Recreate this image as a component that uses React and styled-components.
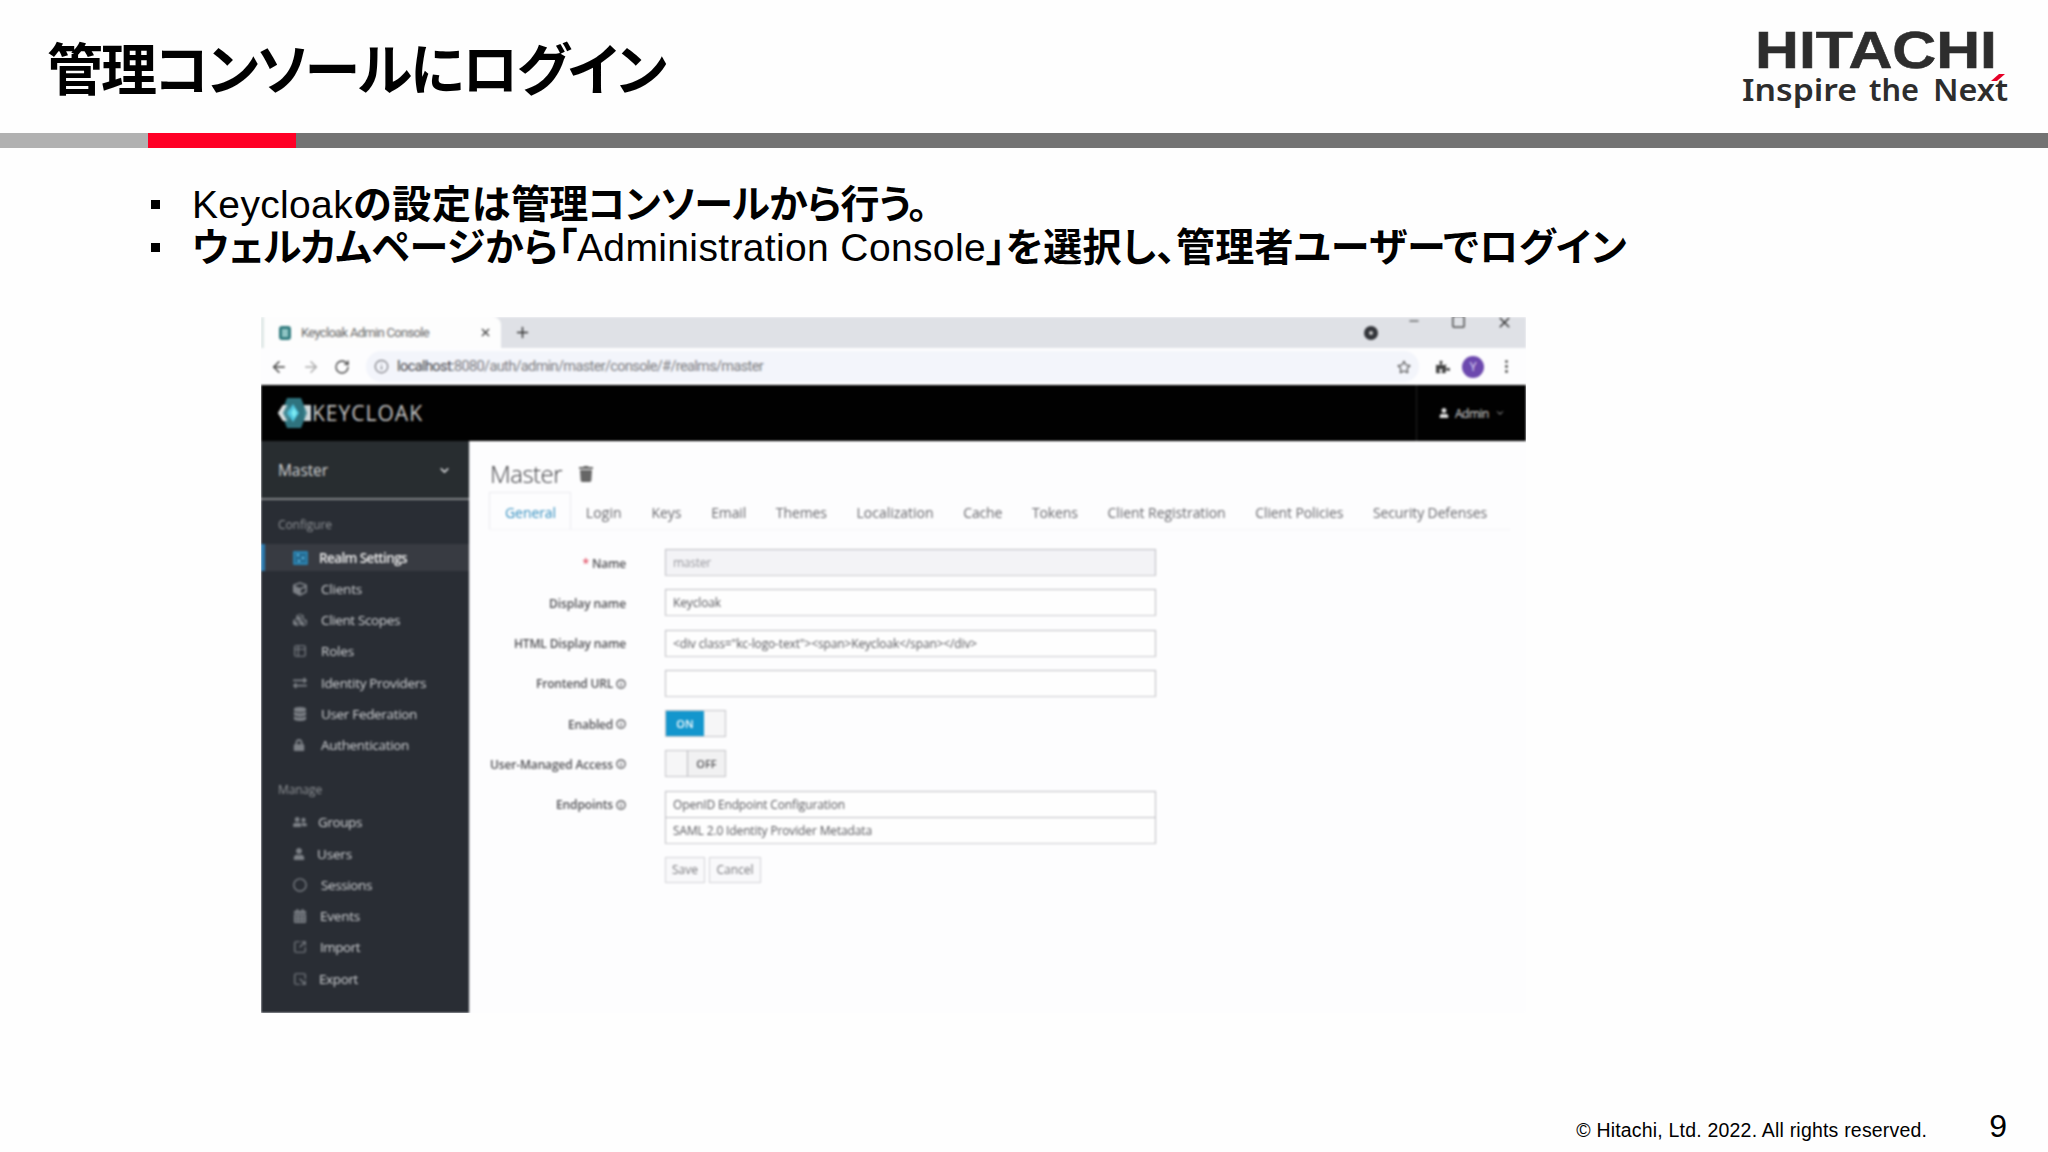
import { useLayoutEffect, useRef, useState } from 'react';
import styled, { createGlobalStyle } from 'styled-components';
import {
  FaCalendarAlt,
  FaCube,
  FaCubes,
  FaDatabase,
  FaExchangeAlt,
  FaLock,
  FaPuzzlePiece,
  FaRegCircle,
  FaRegStar,
  FaTrash,
  FaUser,
  FaUserFriends,
} from 'react-icons/fa';
import {
  ArrowLeft,
  ArrowRight,
  ChevronDown,
  EllipsisVertical,
  Info,
  Minus,
  Plus,
  RotateCw,
  Square,
  SquareArrowOutUpRight,
  SquareArrowOutDownRight,
  Table2,
  X,
} from 'lucide-react';

const GlobalStyle = createGlobalStyle`
  * {
    box-sizing: border-box;
  }

  body {
    margin: 0;
    background: #fefefe;
    color: #000;
    font-family: 'Liberation Sans', 'Noto Sans CJK JP', sans-serif;
  }
`;

const Slide = styled.div`
  width: 2048px;
  height: 1152px;
  display: flex;
  flex-direction: column;
  overflow: hidden;
`;

/* ---------- slide header ---------- */

const Header = styled.header`
  height: 133px;
  flex: none;
  padding: 0 40px 0 47px;
  display: flex;
  justify-content: space-between;
`;

const Title = styled.h1`
  margin: 0;
  height: 132px;
  line-height: 132px;
  font-family: 'Noto Sans CJK JP', sans-serif;
  font-size: 56px;
  font-weight: bold;
  font-feature-settings: 'palt';
`;

const Logo = styled.svg`
  width: 268px;
  height: 120px;
  fill: #2d2d2d;
`;

const ColorBar = styled.div`
  height: 15px;
  flex: none;
  display: grid;
  grid-template-columns: 148px 148px 1fr;
`;

const Stripe = styled.div`
  background: ${(p) => p.$color};
`;

/* ---------- bullets ---------- */

const Bullets = styled.ul`
  margin: 0;
  padding: 32px 0 0 151px;
  height: 169px;
  flex: none;
  list-style: none;
`;

const Bullet = styled.li`
  height: 43px;
  line-height: 43px;
  display: flex;
  align-items: baseline;
  font-size: 39px;

  &::before {
    content: '';
    width: 9px;
    height: 9px;
    margin-right: 32px;
    position: relative;
    top: -9px;
    background: #000;
  }
`;

const Jp = styled.span`
  font-family: 'Noto Sans CJK JP', sans-serif;
  font-weight: bold;
  font-feature-settings: 'palt';
`;

/* ---------- browser window ---------- */

const Window = styled.section`
  width: 1265px;
  height: 696px;
  margin-left: 261px;
  flex: none;
  overflow: hidden;
  background: #fdfdfe;
  font-family: 'Open Sans', 'Noto Sans', sans-serif;
`;

const Soft = styled.div`
  height: 100%;
  display: flex;
  flex-direction: column;
  filter: blur(0.85px);
`;

const TabStrip = styled.div`
  height: 31px;
  flex: none;
  display: flex;
  background: #dfe1e6;
`;

const BrowserTab = styled.div`
  width: 240px;
  padding: 0 9px 0 15px;
  display: flex;
  align-items: center;
  background: #fdfdfd;
  border-left: 3px solid #dfe8e6;
  border-radius: 0 8px 0 0;
  font-family: Roboto, sans-serif;
  font-size: 13px;
  color: #6a6a6a;
`;

const Favicon = styled.span`
  width: 12px;
  height: 14px;
  margin-right: 10px;
  border: 3px solid #347d80;
  border-radius: 3px;
  background: #8fc4c4;
`;

const NewTab = styled.span`
  padding-left: 13px;
  display: flex;
  align-items: center;
  color: #333;
`;

const Push = styled.span`
  flex: 1;
`;

const WindowButtons = styled.div`
  width: 171px;
  display: flex;
  color: #333;

  svg {
    flex: none;
    margin-top: -3px;
    margin-right: 30px;
  }
`;

const MediaDot = styled.span`
  width: 14px;
  height: 14px;
  flex: none;
  margin: 9px 29px 0 9px;
  border: 5px solid #33353a;
  border-radius: 50%;
  background: #ccc;
`;

const Toolbar = styled.div`
  height: 37px;
  flex: none;
  padding: 0 11px 0 9px;
  display: flex;
  align-items: center;
  gap: 14px;
  background: #fdfdfe;
  color: #444;
`;

const Address = styled.div`
  height: 31px;
  flex: 1;
  margin: 0 3px 0 2px;
  padding: 0 8px 0 8px;
  display: flex;
  align-items: center;
  gap: 8px;
  border-radius: 15px;
  background: #f3f5fb;
  font-family: Roboto, sans-serif;
  font-size: 14.5px;
  color: #7d7d82;
`;

const Host = styled.span`
  color: #444448;
`;

const Avatar = styled.span`
  width: 22px;
  height: 22px;
  margin-left: -2px;
  border-radius: 50%;
  background: #6c48ae;
  color: #d5c8ee;
  font-family: Roboto, sans-serif;
  font-size: 12px;
  line-height: 22px;
  text-align: center;
`;

/* ---------- keycloak console ---------- */

const Masthead = styled.div`
  height: 56px;
  flex: none;
  padding-left: 17px;
  display: flex;
  align-items: center;
  background: #010101;
`;

const Brand = styled.div`
  display: flex;
  align-items: center;
  font-family: 'Open Sans', sans-serif;
  font-size: 21px;
  font-weight: 500;
  line-height: 52px;
  color: #c8c8c8;
`;

const UserMenu = styled.div`
  width: 110px;
  height: 56px;
  padding-left: 22px;
  display: flex;
  align-items: center;
  gap: 6px;
  border-left: 1px solid #222;
  font-size: 12px;
  color: #dcdcdc;
`;

const Body = styled.div`
  flex: 1;
  display: flex;
`;

const Sidebar = styled.nav`
  width: 208px;
  flex: none;
  background: #292d34;
  color: #d2d4d6;
`;

const Realm = styled.div`
  height: 59px;
  padding: 1px 18px 0 17px;
  display: flex;
  align-items: center;
  justify-content: space-between;
  border-bottom: 2px solid #808386;
  background: #282d30;
  font-size: 15.5px;
`;

const Group = styled.div`
  height: ${(p) => p.$height}px;
  padding: ${(p) => p.$top}px 0 0 17px;
  font-size: 12px;
  line-height: 18px;
  color: #8f9296;
`;

const Item = styled.div`
  height: 31.25px;
  display: flex;
  align-items: center;
`;

const ItemInner = styled.div`
  width: 100%;
  height: 27px;
  padding-left: ${(p) => (p.$active ? 28 : 32)}px;
  display: flex;
  align-items: center;
  font-size: 13.5px;
  font-weight: ${(p) => (p.$active ? 600 : 500)};
  color: ${(p) => (p.$active ? '#f0f0f0' : '#cfd1d4')};
  background: ${(p) => (p.$active ? '#383b42' : 'transparent')};
  border-left: ${(p) => (p.$active ? '4px solid #2b79ad' : 'none')};
`;

const ItemIcon = styled.span`
  width: ${(p) => p.$width}px;
  display: flex;
  color: ${(p) => (p.$active ? '#2f8fc0' : '#7c8086')};
`;

const Content = styled.main`
  flex: 1;
  padding: 14px 16px 0 19px;
  border-left: 1px solid #eaebef;
  background: #fdfdfe;
`;

const PageTitle = styled.h2`
  height: 37px;
  margin: 0;
  padding-left: 1px;
  display: flex;
  align-items: center;
  gap: 16px;
  font-size: 24px;
  font-weight: 300;
  color: #3c3c40;
`;

const Tabs = styled.div`
  height: 38px;
  display: flex;
  border-bottom: 1px solid #f4f4f7;
  font-size: 14px;
  color: #68686d;
`;

const Tab = styled.span`
  height: 37px;
  flex: none;
  margin-right: ${(p) => (p.$active ? 0 : 14.9)}px;
  padding: 0 ${(p) => (p.$active ? 14 : 0)}px 0 ${(p) => (p.$active ? 15 : 14.8)}px;
  line-height: ${(p) => (p.$active ? 39 : 41)}px;
  color: ${(p) => (p.$active ? '#3690c0' : 'inherit')};
  border: ${(p) => (p.$active ? '1px solid #ebebef' : 'none')};
  border-bottom: none;
`;

const Form = styled.div`
  padding-top: 19px;
  display: grid;
  grid-template-columns: 137px 491px;
  column-gap: 39px;
  grid-auto-rows: 40.25px;
`;

const Label = styled.label`
  height: 28px;
  display: flex;
  align-items: center;
  justify-content: flex-end;
  gap: 3px;
  font-size: 12px;
  font-weight: 600;
  color: #505054;
  white-space: nowrap;
`;

const Star = styled.span`
  color: #e0455c;
`;

const Field = styled.div`
  height: 27px;
  padding-left: 7px;
  display: flex;
  align-items: center;
  font-size: 12px;
  border: 1px solid #bdbdc2;
  border-bottom-color: #cacace;
  background: ${(p) => (p.$disabled ? '#f3f3f6' : '#fefefe')};
  color: ${(p) => (p.$disabled ? '#98989e' : '#58585d')};

  & + & {
    margin-top: -1px;
  }
`;

const Switch = styled.div`
  width: 61px;
  height: 27px;
  display: flex;
  border: 1px solid #c4c4c8;
  background: #f6f6f7;
  font-size: 11px;
  font-weight: 600;
  line-height: 26px;
  text-align: center;
`;

const SwitchText = styled.span`
  width: 38px;
  background: ${(p) => (p.$on ? '#1396cd' : '#f1f1f2')};
  color: ${(p) => (p.$on ? '#fff' : '#57575a')};
  border-left: ${(p) => (p.$on ? 'none' : '1px solid #b8b8bc')};
`;

const Knob = styled.span`
  flex: 1;
`;

const Buttons = styled.div`
  display: flex;
  gap: 4px;
  margin-top: 26px;
`;

const Button = styled.button`
  width: ${(p) => p.$width}px;
  height: 26px;
  padding: 0;
  border: 1px solid #d2d2d6;
  background: #f9f9fb;
  font: 12px 'Open Sans', sans-serif;
  color: #77777b;
`;

/* ---------- slide footer ---------- */

const Footer = styled.footer`
  margin-top: auto;
  height: 50px;
  padding-right: 41px;
  display: flex;
  align-items: baseline;
  justify-content: flex-end;
  font-size: 19.5px;
  line-height: 48px;
`;

const PageNumber = styled.span`
  margin-left: 62px;
  font-size: 32px;
`;

const Tracked = styled.span`
  display: inline-block;
  white-space: pre;
`;

// spreads the letters so that the text takes exactly `width` pixels
function Fit({ width, children }) {
  const ref = useRef(null);
  const [spacing, setSpacing] = useState(null);

  useLayoutEffect(() => {
    if (spacing === null) {
      const natural = ref.current.getBoundingClientRect().width;
      setSpacing((width - natural) / children.length);
    }
  }, [spacing, width, children]);

  return (
    <Tracked ref={ref} style={{ letterSpacing: spacing ?? 0 }}>
      {children}
    </Tracked>
  );
}

// realm settings: a board with three slider knobs
function SettingsIcon() {
  return (
    <svg width="15" height="14" viewBox="0 0 15 14">
      <rect width="15" height="14" rx="1" fill="#2a7fab" />
      <path d="M2 4h11M2 7h11M2 10h11" stroke="#1f4f6b" />
      <path d="M4 3h2v2H4zM9 6h2v2H9zM5 9h2v2H5z" fill="#5fb4db" />
    </svg>
  );
}

const configure = [
  { name: 'Realm Settings', width: 88, icon: SettingsIcon, active: true },
  { name: 'Clients', width: 41, icon: FaCube },
  { name: 'Client Scopes', width: 79, icon: FaCubes },
  { name: 'Roles', width: 33, icon: Table2 },
  { name: 'Identity Providers', width: 105, icon: FaExchangeAlt },
  { name: 'User Federation', width: 96, icon: FaDatabase },
  { name: 'Authentication', width: 88, icon: FaLock },
];

const manage = [
  { name: 'Groups', width: 44, icon: FaUserFriends, iconWidth: 25 },
  { name: 'Users', width: 35, icon: FaUser, iconWidth: 24 },
  { name: 'Sessions', width: 51, icon: FaRegCircle, iconWidth: 28 },
  { name: 'Events', width: 40, icon: FaCalendarAlt, iconWidth: 27 },
  { name: 'Import', width: 40, icon: SquareArrowOutUpRight, iconWidth: 27 },
  { name: 'Export', width: 39, icon: SquareArrowOutDownRight, iconWidth: 26 },
];

const tabs = [
  ['General', 51],
  ['Login', 36],
  ['Keys', 30],
  ['Email', 35],
  ['Themes', 51],
  ['Localization', 77],
  ['Cache', 39],
  ['Tokens', 46],
  ['Client Registration', 118],
  ['Client Policies', 88],
  ['Security Defenses', 114],
];

function Menu({ items }) {
  return items.map(({ name, width, icon: Icon, active, iconWidth = 28 }) => (
    <Item key={name}>
      <ItemInner $active={active}>
        <ItemIcon $active={active} $width={active ? 26 : iconWidth}>
          <Icon size={name === 'Authentication' || name === 'Users' ? 12 : 14} />
        </ItemIcon>
        <Fit width={width}>{name}</Fit>
      </ItemInner>
    </Item>
  ));
}

const slogan = [
  { word: 'Inspire', x: 2, width: 115 },
  { word: 'the', x: 129, width: 50 },
  { word: 'Next', x: 193, width: 75 },
];

function HitachiLogo() {
  return (
    <Logo viewBox="0 0 268 120">
      <text
        x="15"
        y="68"
        fontFamily="Liberation Sans, sans-serif"
        fontSize="52"
        fontWeight="bold"
        textLength="242"
        lengthAdjust="spacingAndGlyphs"
        stroke="#2d2d2d"
        strokeWidth="0.6"
      >
        HITACHI
      </text>
      {slogan.map(({ word, x, width }) => (
        <text
          key={word}
          x={x}
          y="101"
          fontFamily="Noto Sans, sans-serif"
          fontSize="30"
          fontWeight="600"
          textLength={width}
          lengthAdjust="spacingAndGlyphs"
        >
          {word}
        </text>
      ))}
      <path fill="#e60027" d="M265 74h-6l-8 7h6z" />
    </Logo>
  );
}

function KeycloakMark() {
  return (
    <svg width="34" height="32" viewBox="0 0 34 32">
      <path fill="#cfd6d8" d="M5 8h6v16H5l-5-8zM26 8h7v16h-7z" />
      <path fill="#347f8c" d="M9 1h14l6 15-6 15H9L3 16z" opacity=".9" />
      <path fill="#d8dfe0" d="M5 8h4l-4 8 4 8H5l-5-8z" />
      <path fill="#4fc3dc" d="M15 7l6 9-6 9-6-9z" />
      <path fill="#7ceaf2" d="M16 11l3 5-3 5-3-5z" />
    </svg>
  );
}

export default function App() {
  return (
    <>
      <GlobalStyle />
      <Slide>
        <Header>
          <Title>
            <Fit width={618}>管理コンソールにログイン</Fit>
          </Title>
          <HitachiLogo />
        </Header>
        <ColorBar>
          <Stripe $color="#b1b1b1" />
          <Stripe $color="#ff0026" />
          <Stripe $color="#737373" />
        </ColorBar>

        <Bullets>
          <Bullet>
            <Fit width={161}>Keycloak</Fit>
            <Jp>
              <Fit width={158}>の設定は</Fit>
              <Fit width={416}>管理コンソールから行う。</Fit>
            </Jp>
          </Bullet>
          <Bullet>
            <Jp>
              <Fit width={385}>ウェルカムページから「</Fit>
            </Jp>
            <Fit width={409}>Administration Console</Fit>
            <Jp>
              <Fit width={641}>」を選択し、管理者ユーザーでログイン</Fit>
            </Jp>
          </Bullet>
        </Bullets>

        <Window>
          <Soft>
            <TabStrip>
              <BrowserTab>
                <Favicon />
                <Fit width={128}>Keycloak Admin Console</Fit>
                <Push />
                <X size={13} color="#333" />
              </BrowserTab>
              <NewTab>
                <Plus size={17} />
              </NewTab>
              <Push />
              <WindowButtons>
                <MediaDot />
                <Minus size={14} />
                <Square size={15} />
                <X size={17} />
              </WindowButtons>
            </TabStrip>
            <Toolbar>
              <ArrowLeft size={18} />
              <ArrowRight size={18} color="#aaa" />
              <RotateCw size={16} />
              <Address>
                <Info size={15} />
                <span>
                  <Host>
                    <Fit width={57}>localhost:</Fit>
                  </Host>
                  <Fit width={309}>8080/auth/admin/master/console/#/realms/master</Fit>
                </span>
                <Push />
                <FaRegStar size={14} color="#555" />
              </Address>
              <FaPuzzlePiece size={14} />
              <Avatar>Y</Avatar>
              <EllipsisVertical size={17} />
            </Toolbar>

            <Masthead>
              <Brand>
                <KeycloakMark />
                <Fit width={111}>KEYCLOAK</Fit>
              </Brand>
              <Push />
              <UserMenu>
                <FaUser size={10} />
                <Fit width={34}>Admin</Fit>
                <ChevronDown size={10} />
              </UserMenu>
            </Masthead>

            <Body>
              <Sidebar>
                <Realm>
                  <Fit width={50}>Master</Fit>
                  <ChevronDown size={13} strokeWidth={3} />
                </Realm>
                <Group $height={42} $top={16}>
                  <Fit width={54}>Configure</Fit>
                </Group>
                <Menu items={configure} />
                <Group $height={46} $top={20}>
                  <Fit width={44}>Manage</Fit>
                </Group>
                <Menu items={manage} />
              </Sidebar>

              <Content>
                <PageTitle>
                  <Fit width={72}>Master</Fit>
                  <FaTrash size={16} color="#666" />
                </PageTitle>
                <Tabs>
                  {tabs.map(([name, width], i) => (
                    <Tab key={name} $active={i === 0}>
                      <Fit width={width}>{name}</Fit>
                    </Tab>
                  ))}
                </Tabs>

                <Form>
                  <Label>
                    <Star>*</Star>
                    <Fit width={34}>Name</Fit>
                  </Label>
                  <Field $disabled>
                    <Fit width={38}>master</Fit>
                  </Field>

                  <Label>
                    <Fit width={77}>Display name</Fit>
                  </Label>
                  <Field>
                    <Fit width={48}>Keycloak</Fit>
                  </Field>

                  <Label>
                    <Fit width={112}>HTML Display name</Fit>
                  </Label>
                  <Field>
                    <Fit width={304}>{'<div class="kc-logo-text"><span>Keycloak</span></div>'}</Fit>
                  </Field>

                  <Label>
                    <Fit width={77}>Frontend URL</Fit>
                    <Info size={10} strokeWidth={3} />
                  </Label>
                  <Field />

                  <Label>
                    <Fit width={45}>Enabled</Fit>
                    <Info size={10} strokeWidth={3} />
                  </Label>
                  <Switch>
                    <SwitchText $on>ON</SwitchText>
                    <Knob />
                  </Switch>

                  <Label>
                    <Fit width={123}>User-Managed Access</Fit>
                    <Info size={10} strokeWidth={3} />
                  </Label>
                  <Switch>
                    <Knob />
                    <SwitchText>OFF</SwitchText>
                  </Switch>

                  <Label>
                    <Fit width={57}>Endpoints</Fit>
                    <Info size={10} strokeWidth={3} />
                  </Label>
                  <div>
                    <Field>
                      <Fit width={172}>OpenID Endpoint Configuration</Fit>
                    </Field>
                    <Field>
                      <Fit width={199}>SAML 2.0 Identity Provider Metadata</Fit>
                    </Field>
                  </div>

                  <span />
                  <Buttons>
                    <Button $width={40}>Save</Button>
                    <Button $width={52}>Cancel</Button>
                  </Buttons>
                </Form>
              </Content>
            </Body>
          </Soft>
        </Window>

        <Footer>
          <Fit width={351}>© Hitachi, Ltd. 2022. All rights reserved.</Fit>
          <PageNumber>9</PageNumber>
        </Footer>
      </Slide>
    </>
  );
}
